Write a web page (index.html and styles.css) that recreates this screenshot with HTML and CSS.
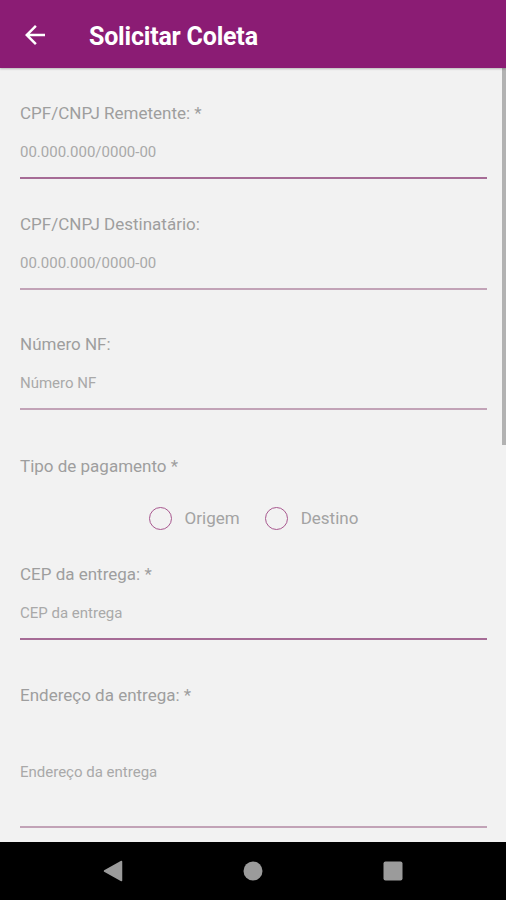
FILE: index.html
```html
<!DOCTYPE html>
<html lang="pt-BR">
<head>
    <meta charset="UTF-8">
    <meta name="viewport" content="width=device-width, initial-scale=1.0">
    <title>Solicitar Coleta</title>
    <link rel="stylesheet" href="styles.css">
</head>
<body>
    <div class="screen">
        <header class="toolbar">
            <svg class="back" viewBox="0 0 24 24" width="30" height="30">
                <path d="M20 11H7.83l5.59-5.59L12 4l-8 8 8 8 1.41-1.41L7.83 13H20v-2z" fill="#fff"/>
            </svg>
            <h1>Solicitar Coleta</h1>
        </header>

        <main class="content">
            <div class="form">
                <div class="field first">
                    <label>CPF/CNPJ Remetente: *</label>
                    <div class="input focused">00.000.000/0000-00</div>
                </div>
                <div class="field">
                    <label>CPF/CNPJ Destinatário:</label>
                    <div class="input">00.000.000/0000-00</div>
                </div>
                <div class="field spaced">
                    <label>Número NF:</label>
                    <div class="input">Número NF</div>
                </div>
                <div class="field payment">
                    <label>Tipo de pagamento *</label>
                    <div class="radios">
                        <span class="radio"><i></i>Origem</span>
                        <span class="radio"><i></i>Destino</span>
                    </div>
                </div>
                <div class="field tight">
                    <label>CEP da entrega: *</label>
                    <div class="input focused">CEP da entrega</div>
                </div>
                <div class="field wide">
                    <label>Endereço da entrega: *</label>
                    <div class="input area">Endereço da entrega</div>
                </div>
            </div>
            <div class="scrollbar"></div>
        </main>

        <nav class="navbar">
            <svg width="20" height="22" viewBox="0 0 20 22"><path d="M18.5 1.5 L18.5 20.5 L1.5 11 Z" fill="#9b9b9b" stroke="#9b9b9b" stroke-width="1.5" stroke-linejoin="round"/></svg>
            <svg width="20" height="20" viewBox="0 0 20 20"><circle cx="10" cy="10" r="9.5" fill="#9b9b9b"/></svg>
            <svg width="20" height="20" viewBox="0 0 20 20"><rect x="0.5" y="0.5" width="19" height="19" rx="2" fill="#9b9b9b"/></svg>
        </nav>
    </div>
</body>
</html>
```

FILE: styles.css
```css
body {
    margin: 0;
    padding: 0;
    font-family: "Roboto", "Noto Sans", sans-serif;
    background: #f2f2f2;
}
.screen {
    display: flex;
    flex-direction: column;
    height: 900px;
    overflow: hidden;
}
.toolbar {
    height: 68px;
    flex-shrink: 0;
    background: #8b1c74;
    display: flex;
    align-items: center;
    padding-left: 20px;
    box-shadow: 0 1px 2px rgba(0, 0, 0, 0.25);
    position: relative;
    z-index: 1;
}
.back {
    display: block;
    margin-top: 2px;
}
.toolbar h1 {
    margin: 0 0 0 39px;
    padding-top: 4px;
    color: #fff;
    font-size: 25px;
    font-weight: 700;
    letter-spacing: -0.2px;
}
.content {
    flex: 1;
    position: relative;
    overflow: hidden;
}
.form {
    padding: 0 19px 0 20px;
}
.field {
    padding-top: 35px;
}
.field.first {
    padding-top: 35px;
}
.field.spaced {
    padding-top: 44px;
}
.field.payment {
    padding-top: 46px;
}
.field.wide {
    padding-top: 45px;
}
.field.tight {
    padding-top: 22px;
}
.field label {
    display: block;
    font-size: 17px;
    line-height: 20px;
    color: #9e9e9e;
}
.input {
    font-size: 15px;
    line-height: 20px;
    color: #a9a9a9;
    padding: 19px 0 15px;
    border-bottom: 2px solid #c2a3b7;
}
.input.focused {
    border-bottom-color: #a66c96;
}
.input.area {
    padding: 57px 0 44px;
}
.radios {
    display: flex;
    justify-content: center;
    align-items: center;
    gap: 25px;
    height: 48px;
    margin-top: 18px;
}
.radio {
    display: flex;
    align-items: center;
    font-size: 17px;
    color: #a3a3a3;
}
.radio i {
    width: 21px;
    height: 21px;
    border: 1.5px solid #a8588f;
    border-radius: 50%;
    margin-right: 13px;
}
.scrollbar {
    position: absolute;
    right: 0;
    top: 0;
    width: 4px;
    height: 377px;
    background: #b2b2b2;
}
.navbar {
    height: 58px;
    flex-shrink: 0;
    background: #000;
    display: flex;
    align-items: center;
    justify-content: space-between;
    padding: 0 103px;
}
```
